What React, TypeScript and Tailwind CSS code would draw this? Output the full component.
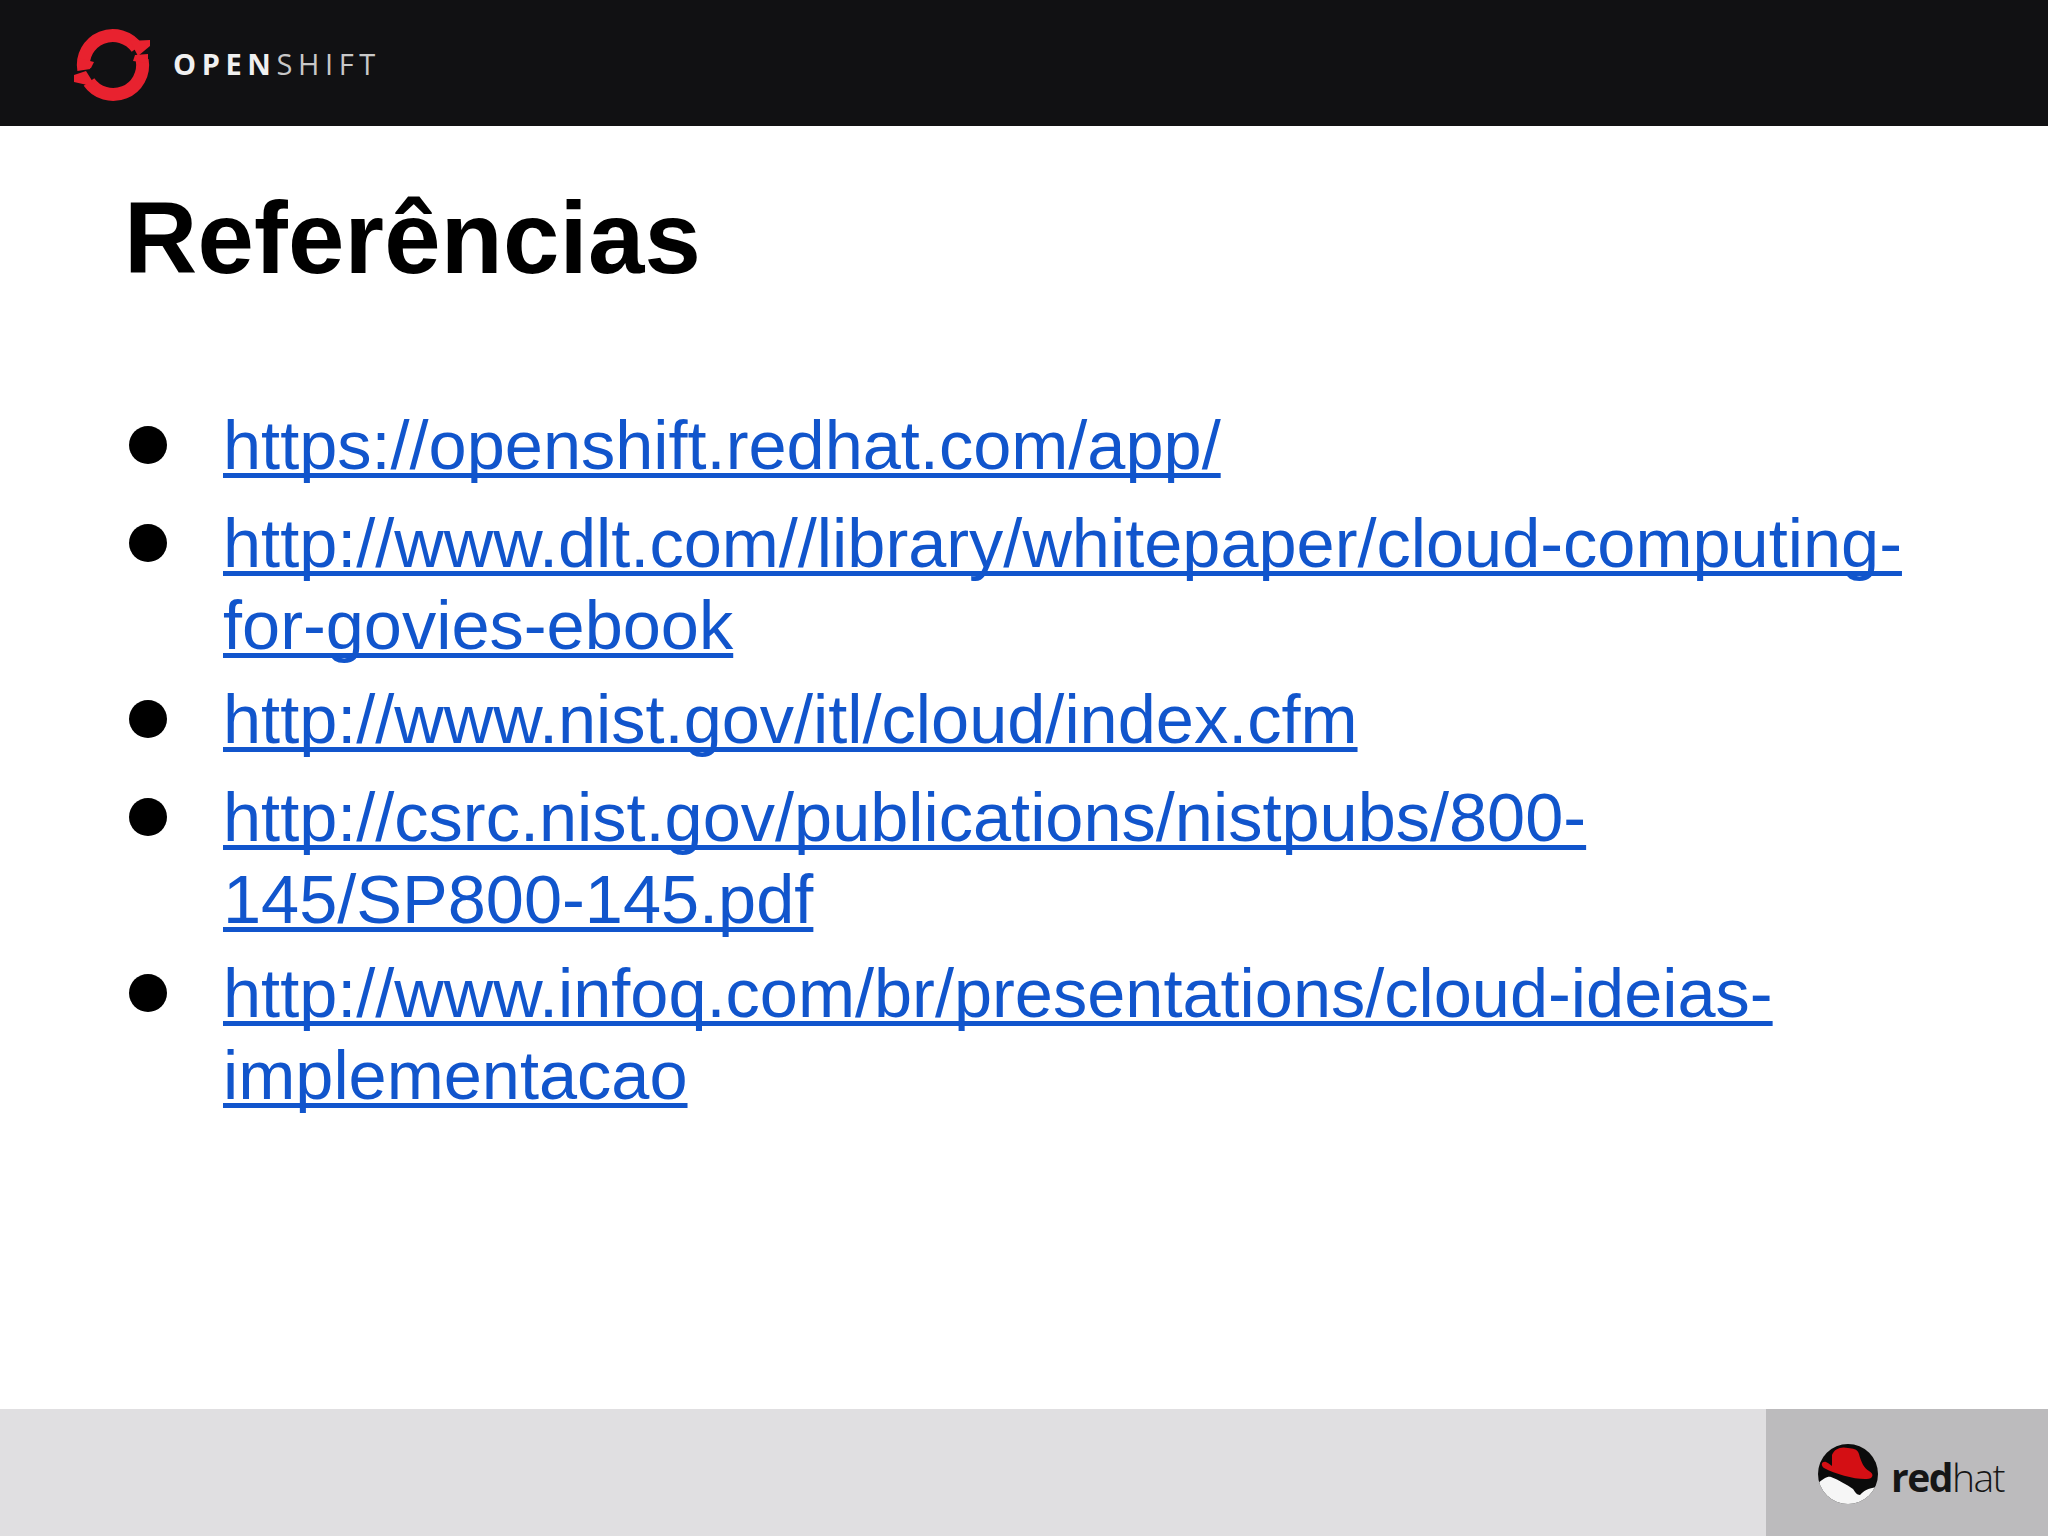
import React from 'react'

const links = [
  ['https://openshift.redhat.com/app/'],
  ['http://www.dlt.com//library/whitepaper/cloud-computing-', 'for-govies-ebook'],
  ['http://www.nist.gov/itl/cloud/index.cfm'],
  ['http://csrc.nist.gov/publications/nistpubs/800-', '145/SP800-145.pdf'],
  ['http://www.infoq.com/br/presentations/cloud-ideias-', 'implementacao'],
]

function OpenShiftMark() {
  return (
    <svg width="84" height="80" viewBox="0 0 84 80" className="shrink-0">
      <g fill="none" stroke="#e8222f" strokeWidth="13">
        <path d="M13.8 45 A29.5 29.5 0 0 1 67 23" />
        <path d="M72.2 35 A29.5 29.5 0 0 1 19 57" />
      </g>
      <path d="M60 16 L80 15 L80 21 L68 31 Z" fill="#e8222f" />
      <path d="M26 62 L4 57 L4 50 L16 46 Z" fill="#e8222f" />
      <path d="M8 33 L24 37 L21 43 L8 44 Z" fill="#e8222f" />
      <path d="M78 38 L63 36 L65 30 L78 29 Z" fill="#e8222f" />
    </svg>
  )
}

function RedHatMark() {
  return (
    <svg width="62" height="62" viewBox="0 0 62 62" className="shrink-0">
      <defs>
        <clipPath id="rh-circle">
          <circle cx="31" cy="31" r="30" />
        </clipPath>
      </defs>
      <g clipPath="url(#rh-circle)">
        <rect width="62" height="62" fill="#0b0b0b" />
        <path d="M0 41 C6 36 10 33 14 34 C22 37 30 42 36 46 C38 49 40 52 43 52 C47 48 50 45 62 44 L62 62 L0 62 Z" fill="#f6f6f6" />
      </g>
      <path d="M15 12 C17 6 24 3 31 5 C36 6 40 5 42 11 C44 19 47 25 52 28 C58 31 56 37 48 36 C36 36 18 31 7 25 C3 22 5 18 9 19 C12 20 13 22 15 23 Z" fill="#d40f14" />
    </svg>
  )
}

export default function App() {
  return (
    <div className="w-[2048px] h-[1536px] flex flex-col bg-white font-['Liberation_Sans',Arial,sans-serif] overflow-hidden">
      <header className="h-[126px] shrink-0 bg-[#111113] flex items-center pl-[70px] pt-[4px]">
        <OpenShiftMark />
        <div className="ml-[19px] mb-[4px] text-[29px] leading-none tracking-[5.6px] font-['Open_Sans',sans-serif]">
          <span className="font-bold text-[#f0f0f0]">OPEN</span>
          <span className="text-[#c8c8c8]">SHIFT</span>
        </div>
      </header>

      <main className="flex-1 pl-[124px] pt-[62px]">
        <h1 className="text-[101.4px] leading-[100px] font-bold text-black tracking-[0.2px]">Referências</h1>
        <ul className="mt-[117px] flex flex-col">
          {links.map((lines) => (
            <li
              key={lines[0]}
              className={lines.length > 1 ? 'flex text-[68.5px] leading-[82px] mb-[12px]' : 'flex text-[68.5px] leading-[82px] mb-[16px]'}
            >
              <span className="w-[38px] h-[38px] mt-[21px] ml-[5px] mr-[56px] shrink-0 rounded-full bg-black" />
              <a href="#" className="text-[#1155cc] underline decoration-[5px] underline-offset-[4px] [text-decoration-skip-ink:none] whitespace-nowrap">
                {lines.map((line) => (
                  <div key={line}>{line}</div>
                ))}
              </a>
            </li>
          ))}
        </ul>
      </main>

      <footer className="h-[127px] shrink-0 bg-[#e0dfe1] flex justify-end">
        <div className="w-[282px] bg-[#bcbbbd] flex items-center pl-[51px] pt-[3px]">
          <RedHatMark />
          <div className="ml-[12px] mt-[5px] text-[39px] leading-none tracking-[-1.5px] text-[#161616] font-['Open_Sans',sans-serif]">
            <span className="font-bold">red</span>
            <span className="font-light">hat</span>
          </div>
        </div>
      </footer>
    </div>
  )
}
